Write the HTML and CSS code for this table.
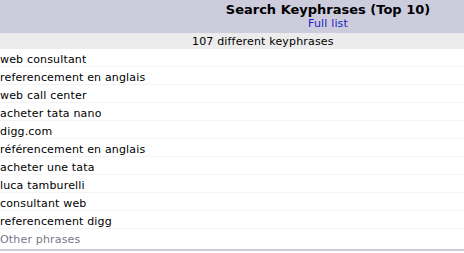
FILE: index.html
```html
<!DOCTYPE html>
<html>
<head>
<meta charset="utf-8">
<link rel="stylesheet" href="styles.css">
</head>
<body>
<div class="panel">
  <div class="head">
    <div class="title">Search Keyphrases (Top 10)</div>
    <a class="full" href="#">Full list</a>
  </div>
  <div class="count">107 different keyphrases</div>
  <div class="rows">
    <div class="row">web consultant</div>
    <div class="row">referencement en anglais</div>
    <div class="row">web call center</div>
    <div class="row">acheter tata nano</div>
    <div class="row">digg.com</div>
    <div class="row">référencement en anglais</div>
    <div class="row">acheter une tata</div>
    <div class="row">luca tamburelli</div>
    <div class="row">consultant web</div>
    <div class="row">referencement digg</div>
    <div class="row other">Other phrases</div>
  </div>
</div>
</body>
</html>
```
FILE: styles.css
```css
html, body { margin: 0; padding: 0; background: #ffffff; }
body { font-family: "DejaVu Sans", Verdana, sans-serif; font-size: 11px; color: #000; }
.panel { width: 464px; border-bottom: 2px solid #ccccdd; }
.head { background: #ccccdd; height: 33px; padding-left: 192px; display: flex; flex-direction: column; align-items: center; box-sizing: border-box; }
.title { font-weight: bold; font-size: 13px; margin-top: 2px; line-height: 16px; }
.full { color: #2222bb; text-decoration: none; line-height: 12px; letter-spacing: 0.17px; }
.count { background: #ececec; height: 16px; box-sizing: border-box; padding-top: 2px; line-height: 14px; padding-left: 192px; letter-spacing: 0.17px; }
.row { height: 18px; box-sizing: border-box; padding-top: 4px; line-height: 13px; border-bottom: 1px solid #f4f4f6; white-space: nowrap; letter-spacing: 0.17px; }
.row:last-child { border-bottom: 0; height: 20px; }
.other { color: #777788; }
```
